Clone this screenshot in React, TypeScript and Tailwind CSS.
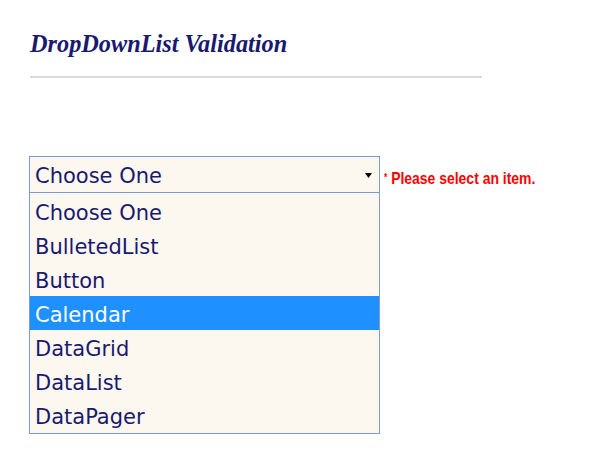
const items = ["Choose One", "BulletedList", "Button", "Calendar", "DataGrid", "DataList", "DataPager"];

export default function App() {
  const selected = "Calendar";
  return (
    <div className="min-h-[463px] bg-white pl-[29px] pt-[30px]">
      <h1 className="pl-px font-['Liberation_Serif',serif] text-[24.3px] font-bold italic leading-[28px] text-[#191970]">
        DropDownList Validation
      </h1>
      <div className="mt-[18px] ml-px h-[2px] w-[452px] bg-[#dadada]" />
      <div className="mt-[78px] flex items-start">
        <div className="w-[351px] font-['Comic_Sans_MS','DejaVu_Sans',sans-serif] text-[21px] text-[#191970]">
          <div className="flex h-[37px] items-center justify-between border border-[#7b9ad8] bg-[#fdf8ef] pl-[5px] pr-[7px]">
            <span className="pt-[5px]">Choose One</span>
            <svg width="7" height="5" viewBox="0 0 7 5" className="mt-[2px]">
              <path d="M0 0h7L3.5 5z" fill="#000" />
            </svg>
          </div>
          <div className="border border-t-0 border-[#7b9ad8] bg-[#fdf8ef] pt-px pb-px">
            {items.map((it) => (
              <div
                key={it}
                className={`flex h-[34px] items-center pl-[5px] pt-[5px] ${
                  it === selected ? "bg-[#1e90ff] text-white" : ""
                }`}
              >
                {it}
              </div>
            ))}
          </div>
        </div>
        <span className="mt-[13px] ml-[4px] inline-block origin-left scale-x-[0.845] whitespace-nowrap font-['Liberation_Sans',sans-serif] text-[16.5px] font-bold leading-[18px] text-[#ff0000]">
          <span className="align-top text-[10px]">*</span> Please select an item.
        </span>
      </div>
    </div>
  );
}
